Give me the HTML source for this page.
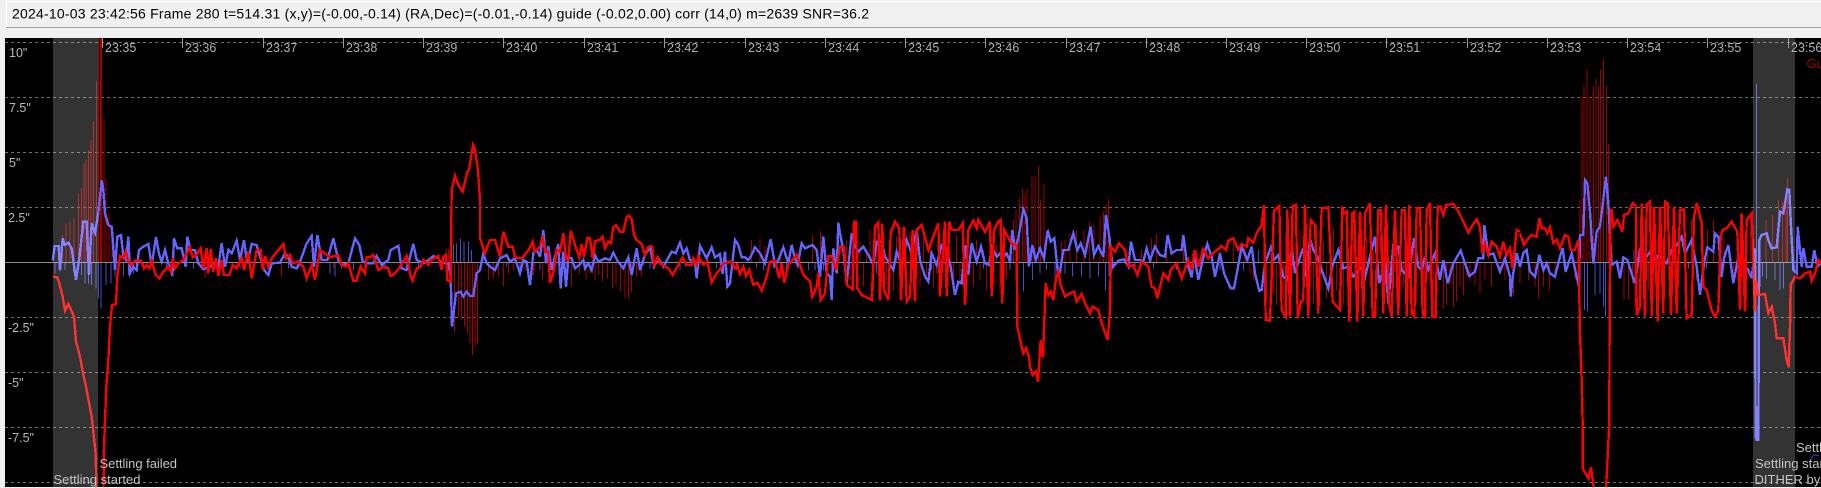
<!DOCTYPE html>
<html><head><meta charset="utf-8"><title>Guide graph</title>
<style>
html,body{margin:0;padding:0;background:#f0f0f0;width:1821px;height:488px;overflow:hidden}
svg{display:block;font-family:"Liberation Sans",sans-serif}
.b{fill:none;stroke:#6464ff;stroke-width:7.2;stroke-linejoin:miter;shape-rendering:crispEdges}
.r{fill:none;stroke:#ff0000;stroke-width:7.2;stroke-linejoin:miter;shape-rendering:crispEdges}
.rb{fill:none;stroke:#a00000;stroke-width:3;shape-rendering:crispEdges}
.bb{fill:none;stroke:#4c4cc0;stroke-width:3;shape-rendering:crispEdges}
.t{fill:#adb2b6;font-size:12.5px}
.y{fill:#b8b8b8;font-size:12.5px}
.s{fill:#c4c4c4;font-size:13px}
</style></head><body>
<svg width="1821" height="488" viewBox="0 0 1821 488" xmlns="http://www.w3.org/2000/svg">
<defs><clipPath id="p"><rect x="5" y="38" width="1816" height="449"/></clipPath></defs>
<rect width="1821" height="488" fill="#f0f0f0"/>
<rect x="6" y="1" width="1815" height="27" fill="#fff"/>
<rect x="7" y="2" width="1814" height="25" fill="#f0f0f0"/>
<rect x="6" y="27" width="1815" height="1" fill="#a0a0a0"/>
<text x="12" y="18.5" font-size="14" fill="#000" textLength="857" lengthAdjust="spacing">2024-10-03 23:42:56 Frame 280 t=514.31 (x,y)=(-0.00,-0.14) (RA,Dec)=(-0.01,-0.14) guide (-0.02,0.00) corr (14,0) m=2639 SNR=36.2</text>
<rect x="5" y="38" width="1816" height="449" fill="#000"/>
<g clip-path="url(#p)">
<g stroke="#6e6e6e" stroke-width="1" stroke-dasharray="3 3" shape-rendering="crispEdges">
<path d="M5 42.5H1821M5 97.5H1821M5 152.5H1821M5 207.5H1821M5 317.5H1821M5 372.5H1821M5 427.5H1821M5 482.5H1821"/>
</g>

<!-- bars -->
<g transform="translate(40 170) scale(.33333)">
<path class="bb" d="M45 310V277M60 305V277M75 300V277M100 305V277M125 315V277M135 340V277M145 340V277M155 345V277M168 355V277M175 385V277M183 415V277M198 345V277M213 340V277M225 320V277M250 320V277M265 315V277M280 310V277M310 300V277M340 300V277M380 295V277M437 290V277M460 295V277M525 300V277M600 295V277M695 295V277M745 295V277M780 290V277M870 310V277M885 320V277M905 295V277M940 300V277M1035 300V277M1100 295V277M1135 300V277M1240 222V277M1250 220V277M1262 205V277M1272 215V277M1285 215V277M1295 240V277M1400 290V277M1440 300V277"/>
<path class="rb" d="M68 195V277M78 160V277M90 155V277M102 145V277M115 70V277M125 55V277M132 -20V277M138 -30V277M145 -60V277M153 -90V277M160 -147V277M169 -267V277M176 -396V277M181 -396V277M185 -396V277M192 -150V277M198 25V277M207 130V277M216 180V277M220 200V277M495 322V277M590 300V277M725 320V277M755 295V277M880 295V277M1218 235V277M1225 235V277M1232 340V277M1243 485V277M1255 440V277M1265 450V277M1273 470V277M1282 490V277M1290 520V277M1298 555V277M1305 530V277M1313 520V277M1345 330V277M1360 325V277M1375 320V277M1390 350V277M1405 310V277M1420 300V277M1455 300V277M1480 320V277"/>
</g>
<g transform="translate(530 170) scale(.33333)">
<path class="bb" d="M5 290V277M30 300V277M340 285V277M360 295V277M450 300V277M465 290V277M500 300V277M560 295V277M620 300V277M680 295V277M700 300V277M730 295V277M770 300V277M810 295V277M835 300V277M855 300V277M880 300V277M920 305V277M945 300V277M1000 300V277M1040 310V277M1115 300V277M1160 300V277M1205 300V277M1300 295V277M1360 295V277M1440 300V277"/>
<path class="rb" d="M5 330V277M15 300V277M38 330V277M60 315V277M125 350V277M148 310V277M168 330V277M180 310V277M195 330V277M205 315V277M218 335V277M233 325V277M248 355V277M258 345V277M272 365V277M285 385V277M295 385V277M305 365V277M320 320V277M335 320V277M665 210V277M690 205V277M705 230V277M752 240V277M848 195V277M872 185V277M910 235V277M950 210V277M960 330V277M970 190V277M980 340V277M990 215V277M1000 350V277M1010 240V277M1020 180V277M1030 360V277M1040 230V277M1050 330V277M1060 190V277M1070 345V277M1080 175V277M1090 360V277M1100 200V277M1110 375V277M1120 215V277M1130 340V277M1140 185V277M1150 365V277M1160 230V277M1170 350V277M1180 205V277M1190 330V277M1200 225V277M1210 355V277M1220 310V277M1230 370V277M1240 215V277M1250 340V277M1260 235V277M1270 360V277M1280 195V277M1290 345V277M1300 220V277M1310 380V277M1320 230V277M1330 350V277M1340 210V277M1350 330V277M1360 240V277M1370 360V277M1380 190V277M1390 345V277M1400 225V277M1410 365V277M1420 200V277M1430 330V277M1440 230V277M1450 150V277M1458 120V277M1468 85V277M1478 55V277M1485 70V277"/>
</g>
<g transform="translate(1020 170) scale(.33333)">
<path class="bb" d="M10 365V277M37 330V277M60 310V277M80 300V277M105 320V277M135 310V277M158 320V277M185 320V277M210 325V277M235 320V277M257 360V277M267 320V277M345 295V277M400 295V277M470 300V277M530 300V277M600 300V277M670 300V277M715 240V277M860 300V277M1025 235V277M1100 300V277"/>
<path class="rb" d="M7 55V277M21 57V277M36 20V277M45 20V277M56 -12V277M72 40V277M62 90V277M125 215V277M135 210V277M150 190V277M170 180V277M192 180V277M208 155V277M222 165V277M240 140V277M250 125V277M258 105V277M265 87V277M365 240V277M395 205V277M410 190V277M440 210V277M490 205V277M520 240V277M545 235V277M600 225V277M640 210V277M675 235V277M690 310V277M700 330V277M740 395V277M750 235V277M760 370V277M770 405V277M780 220V277M790 385V277M800 210V277M810 360V277M820 230V277M830 395V277M840 180V277M850 370V277M860 205V277M870 145V277M880 400V277M890 165V277M900 350V277M910 215V277M920 385V277M930 240V277M940 175V277M950 360V277M960 225V277M970 400V277M980 190V277M990 345V277M1000 215V277M1010 375V277M1020 230V277M1030 390V277M1040 200V277M1050 350V277M1060 240V277M1070 380V277M1080 195V277M1090 400V277M1100 225V277M1110 360V277M1120 210V277M1130 385V277M1140 235V277M1150 350V277M1160 200V277M1170 375V277M1180 240V277M1190 395V277M1200 215V277M1210 365V277M1220 230V277M1230 345V277M1240 400V277M1250 410V277M1260 240V277M1270 415V277M1280 405V277M1290 345V277M1300 410V277M1310 395V277M1320 350V277M1330 375V277M1340 320V277M1350 335V277M1365 345V277M1380 370V277M1395 330V277M1415 350V277M1440 310V277M1455 330V277M1480 320V277"/>
</g>
<g transform="translate(1500 170) scale(.33333)">
<path class="bb" d="M253 420V277M262 425V277M285 375V277M300 370V277M310 410V277M316 440V277M330 430V277M355 300V277M402 240V277M565 295V277M620 295V277M769 -258V277M787 320V277M800 325V277M825 330V277M840 360V277M850 355V277"/>
<path class="rb" d="M40 380V277M60 340V277M85 330V277M105 350V277M115 385V277M130 350V277M148 362V277M165 320V277M195 310V277M225 330V277M240 90V277M246 -219V277M252 -255V277M261 -300V277M270 -219V277M280 -252V277M288 -273V277M296 -252V277M302 -300V277M310 -333V277M319 -252V277M325 -78V277M372 390V277M385 390V277M398 340V277M405 410V277M415 240V277M425 190V277M445 360V277M465 205V277M478 350V277M510 200V277M528 340V277M555 370V277M575 150V277M590 330V277M622 180V277M640 150V277M657 340V277M672 205V277M700 340V277M722 130V277M740 390V277M752 130V277M798 150V277M818 135V277M835 90V277M847 95V277M858 60V277M863 25V277M880 240V277"/>
</g>

<!-- centre line -->
<rect x="5" y="262" width="1816" height="1" fill="#8a8a8a"/>

<!-- RA blue -->
<g transform="translate(40 170) scale(.33333)">
<polyline class="b" points="38,272 44,228 56,228 60,300 68,205 74,225 85,218 95,235 108,330 118,265 130,155 140,155 147,315 155,160 165,188 175,130 185,30 190,60 195,130 205,165 215,170 225,300 232,200 243,195 250,260 258,270 265,200 270,310 280,290 290,300 297,240 310,230 325,222 335,285 348,202 358,255 365,275 375,240 385,280 397,318 402,205 412,235 425,235 437,290 442,200 452,240 465,240 475,280 490,298 510,290 525,280 535,290 545,220 555,290 565,240 575,250 590,212 600,270 612,210 622,280 635,222 650,225 660,260 672,300 685,315 695,280 720,278 735,250 745,260 755,290 770,295 780,275 800,220 815,198 822,290 832,195 845,270 862,270 880,205 895,270 905,285 925,280 945,205 958,225 968,275 985,280 1000,280 1010,258 1025,285 1045,270 1052,240 1075,228 1085,295 1100,300 1120,222 1130,270 1150,280 1165,270 1180,258 1195,265 1205,280 1225,280 1232,320 1236,470 1243,410 1248,370 1262,365 1270,380 1280,365 1290,378 1300,378 1310,310 1320,300 1330,250 1340,280 1350,290 1365,300 1380,265 1400,255 1410,275 1425,265 1440,310 1450,270 1460,275 1470,345 1480,250 1490,240 1500,260"/>
</g>
<g transform="translate(530 170) scale(.33333)">
<polyline class="b" points="30,260 40,180 48,280 55,228 65,300 75,260 85,222 92,355 100,245 108,350 115,265 125,265 135,295 148,285 160,270 165,295 175,280 185,300 195,255 205,275 225,265 240,270 250,248 262,272 280,295 295,262 305,315 320,235 330,300 345,255 360,232 372,290 385,265 400,290 425,245 437,250 450,218 460,250 470,235 480,270 495,275 500,325 510,228 530,265 545,232 555,262 570,252 578,312 585,245 592,350 600,340 615,210 625,225 635,262 645,262 655,270 662,260 675,232 690,250 705,280 722,208 735,285 745,270 760,232 775,280 785,225 795,265 803,285 815,220 825,235 835,230 848,225 860,240 870,320 880,200 890,310 900,320 905,390 910,235 920,310 925,158 932,200 940,240 950,340 965,190 975,230 985,245 1000,230 1015,255 1030,285 1040,215 1055,215 1065,260 1075,275 1090,300 1100,245 1115,285 1130,210 1145,250 1160,180 1170,270 1185,320 1195,335 1205,250 1220,285 1235,225 1250,240 1262,290 1275,375 1285,335 1295,340 1305,225 1315,315 1325,220 1340,275 1353,230 1365,280 1378,285 1385,230 1400,260 1410,250 1420,262 1430,250 1440,275 1447,180 1455,240 1465,205 1480,118 1490,145 1497,290"/>
</g>
<g transform="translate(1020 170) scale(.33333)">
<polyline class="b" points="28,285 37,225 47,270 60,235 72,265 83,180 92,215 103,205 115,320 120,305 130,240 145,240 160,190 172,240 182,220 195,255 212,170 222,255 235,228 250,260 258,135 268,200 278,292 295,272 312,268 325,290 333,215 345,270 360,270 370,275 380,235 390,270 405,230 420,255 435,260 443,195 455,250 470,240 485,240 490,195 500,275 515,322 522,250 535,330 548,270 562,222 575,260 585,320 600,250 612,310 632,355 642,355 655,285 665,230 682,270 695,230 705,310 718,362 725,360 735,280 755,225 760,270 775,255 790,320 803,330 815,240 825,310 840,260 850,235 860,325 870,205 880,240 895,265 905,300 925,355 938,285 955,240 970,295 985,290 1000,320 1025,290 1030,345 1045,280 1065,200 1078,340 1095,280 1105,400 1120,225 1135,230 1145,300 1165,320 1182,205 1195,290 1205,300 1215,260 1225,300 1245,250 1260,330 1270,270 1283,340 1300,280 1322,242 1335,280 1348,318 1365,305 1375,265 1390,265 1393,165 1405,255 1420,250 1440,305 1455,265 1470,320 1472,380"/>
</g>
<g transform="translate(1500 170) scale(.33333)">
<polyline class="b" points="32,380 38,320 50,250 60,290 70,250 80,240 90,305 105,320 118,255 130,300 140,280 150,310 165,320 180,260 188,235 197,305 215,250 230,320 237,350 240,195 250,195 255,30 262,40 270,125 280,280 290,185 300,170 318,20 325,100 335,285 350,275 360,325 370,262 382,270 395,310 405,340 420,240 440,260 450,245 465,270 475,255 490,270 500,280 515,240 530,225 545,200 555,250 575,210 590,290 600,375 612,280 622,232 640,245 645,190 655,200 665,320 672,265 685,225 700,340 715,260 735,290 745,300 755,325 765,235 767,800 770,810 775,810 776,560 778,210 785,195 800,190 805,210 815,235 830,232 840,125 850,130 862,58 868,60 872,150 880,300 890,310 893,170 905,290 910,235 920,290 935,290 943,240 952,290 963,280"/>
</g>

<!-- Dec red -->
<g transform="translate(40 170) scale(.33333)">
<polyline class="r" points="39,320 52,322 58,340 68,380 75,422 85,402 102,440 108,515 115,540 122,570 127,600 138,650 155,740 167,850 169,950 170,1000 190,1000 192,830 199,650 205,570 210,470 216,405 228,403 232,320 240,258 250,265 257,245 265,275 275,285 285,272 303,272 312,295 320,285 328,295 335,272 347,315 358,325 370,305 385,290 392,305 398,265 405,295 415,280 430,270 450,232 458,262 470,255 482,235 490,295 500,235 505,310 512,238 520,305 528,265 535,318 545,270 552,315 568,315 578,285 590,295 605,265 612,300 625,245 635,325 650,240 662,240 668,300 675,258 685,290 697,262 715,240 730,222 738,265 750,255 758,280 775,275 790,290 800,325 815,285 825,330 840,240 870,262 895,255 905,285 918,290 925,280 940,332 950,332 962,290 975,310 980,262 990,262 1000,255 1015,300 1030,290 1045,295 1052,318 1065,310 1080,290 1100,258 1112,320 1118,332 1130,295 1142,290 1150,270 1165,285 1172,270 1195,258 1205,300 1210,260 1218,255 1222,330 1232,335 1235,60 1245,18 1255,45 1268,65 1282,5 1287,0 1299,-75 1305,-60 1314,0 1320,90 1320,205 1335,250 1350,210 1365,210 1380,260 1390,185 1405,230 1418,230 1425,262 1445,265 1465,242 1478,215 1485,245 1500,230"/>
</g>
<g transform="translate(530 170) scale(.33333)">
<polyline class="r" points="30,225 38,205 45,245 55,245 60,338 72,300 80,240 90,245 100,190 108,268 115,270 122,182 135,225 148,262 155,222 162,260 172,205 180,205 188,265 195,213 210,210 218,200 225,235 235,215 243,220 250,172 258,165 270,185 280,185 290,140 298,138 305,148 312,195 320,210 335,222 345,255 355,230 367,230 372,290 382,262 390,280 405,290 415,295 428,315 445,285 458,262 470,285 485,285 490,265 500,285 505,258 520,285 532,275 545,337 560,310 572,295 578,282 590,278 605,275 615,295 622,285 630,312 640,290 648,318 658,300 670,345 682,338 695,362 710,320 720,275 735,272 748,325 755,280 763,338 775,285 800,255 820,315 840,335 847,380 860,350 865,310 872,390 885,370 895,258 905,258 918,300 930,230 942,232 950,345 968,358 972,155 978,155 982,355 995,375 1015,385 1025,390 1035,170 1045,158 1050,392 1057,160 1062,360 1075,390 1082,190 1095,155 1108,175 1113,392 1122,170 1130,395 1140,380 1148,180 1155,395 1160,180 1175,165 1195,240 1225,160 1230,380 1245,155 1250,380 1258,155 1265,180 1285,180 1298,160 1305,405 1315,180 1330,152 1340,175 1345,150 1365,185 1380,155 1385,380 1392,180 1405,155 1412,150 1417,400 1423,180 1445,222 1460,225 1462,470 1475,530 1480,550 1488,535 1497,560"/>
</g>
<g transform="translate(1020 170) scale(.33333)">
<polyline class="r" points="27,560 30,590 38,615 48,605 54,635 62,510 69,562 77,340 85,375 92,365 100,390 108,325 115,305 122,345 135,380 150,370 162,365 170,395 185,372 195,400 210,430 218,410 235,420 245,460 263,510 270,420 273,230 285,245 297,220 315,240 325,290 340,285 352,315 365,275 385,290 395,350 405,355 412,385 430,310 445,330 452,300 470,280 485,325 505,270 515,300 525,240 535,290 550,238 565,265 585,245 605,228 618,240 625,212 640,205 655,240 665,222 680,230 685,205 700,218 710,190 725,165 732,105 737,450 750,452 762,122 778,108 785,420 797,440 802,118 810,440 818,108 828,105 833,445 843,395 850,390 855,105 865,440 872,150 885,165 895,430 905,115 925,112 938,395 960,420 967,110 972,130 980,125 988,455 997,130 1003,125 1012,455 1020,125 1030,440 1035,130 1050,100 1058,440 1065,440 1075,120 1083,120 1090,430 1098,105 1107,400 1115,440 1125,120 1135,435 1145,120 1155,120 1160,440 1168,105 1175,430 1183,440 1190,115 1200,115 1208,430 1215,445 1220,120 1230,100 1237,440 1247,440 1253,110 1262,110 1270,135 1278,105 1300,102 1315,125 1330,155 1345,188 1355,170 1370,148 1380,170 1387,250 1395,220 1405,255 1415,215 1430,230 1440,260 1450,215 1460,255 1470,235 1478,295 1490,180 1500,185"/>
</g>
<g transform="translate(1500 170) scale(.33333)">
<polyline class="r" points="60,190 65,205 72,225 85,205 95,195 110,200 118,145 125,175 135,175 142,190 150,172 160,220 170,210 180,235 195,195 205,200 212,240 225,240 235,210 240,490 243,570 245,630 248,760 248,895 265,925 273,892 282,960 318,960 322,880 328,755 329,420 332,120 335,120 340,170 352,150 367,185 372,135 385,130 398,100 408,110 410,435 420,410 425,100 435,440 440,105 450,95 455,440 462,110 473,455 480,110 490,430 495,95 503,100 513,435 522,110 530,430 540,120 552,118 560,445 575,435 582,140 590,100 605,160 610,350 620,360 635,420 645,440 655,420 662,200 668,180 680,175 695,155 712,185 720,420 725,130 735,425 740,150 755,130 765,425 768,330 775,375 795,372 805,430 815,410 825,460 830,505 850,505 860,570 866,592 870,470 872,345 885,320 900,325 915,310 930,305 935,332 945,310 955,270 963,280"/>
</g>

<!-- settling bands -->
<rect x="53" y="38" width="45" height="449" fill="#fff" fill-opacity=".2"/>
<rect x="1753" y="38" width="42" height="449" fill="#fff" fill-opacity=".2"/>

<!-- time ticks -->
<path stroke="#9a9a9a" stroke-width="1" fill="none" shape-rendering="crispEdges" d="M102.5 38V48M182.5 38V48M263.5 38V48M343.5 38V48M423.5 38V48M503.5 38V48M584.5 38V48M664.5 38V48M745.5 38V48M825.5 38V48M905.5 38V48M985.5 38V48M1066.5 38V48M1146.5 38V48M1226.5 38V48M1306.5 38V48M1386.5 38V48M1467.5 38V48M1547.5 38V48M1627.5 38V48M1707.5 38V48M1788.5 38V48"/>
<g class="t">
<text x="105" y="52">23:35</text><text x="185" y="52">23:36</text><text x="266" y="52">23:37</text><text x="346" y="52">23:38</text><text x="426" y="52">23:39</text><text x="506" y="52">23:40</text><text x="587" y="52">23:41</text><text x="667" y="52">23:42</text><text x="748" y="52">23:43</text><text x="828" y="52">23:44</text><text x="908" y="52">23:45</text><text x="988" y="52">23:46</text><text x="1069" y="52">23:47</text><text x="1149" y="52">23:48</text><text x="1229" y="52">23:49</text><text x="1309" y="52">23:50</text><text x="1389" y="52">23:51</text><text x="1470" y="52">23:52</text><text x="1550" y="52">23:53</text><text x="1630" y="52">23:54</text><text x="1710" y="52">23:55</text><text x="1791" y="52">23:56</text>
</g>
<g class="y">
<text x="9" y="57">10"</text><text x="9" y="112">7.5"</text><text x="9" y="167">5"</text><text x="8" y="222">2.5"</text><text x="8" y="332">-2.5"</text><text x="8" y="387">-5"</text><text x="8" y="442">-7.5"</text>
</g>
<g class="s">
<text x="99.5" y="468" textLength="77.5" lengthAdjust="spacing">Settling failed</text>
<text x="53.5" y="484" textLength="87" lengthAdjust="spacing">Settling started</text>
<text x="1796" y="452">Settling</text>
<text x="1755" y="468" textLength="87" lengthAdjust="spacing">Settling started</text>
<text x="1754.5" y="484">DITHER by</text>
</g>
<path d="M1811 460A5 5 0 0 1 1819 456" stroke="#4040c0" fill="none"/>
<text x="1806.5" y="68" font-size="13" fill="#a00000">Guide</text>
</g>
</svg>
</body></html>
